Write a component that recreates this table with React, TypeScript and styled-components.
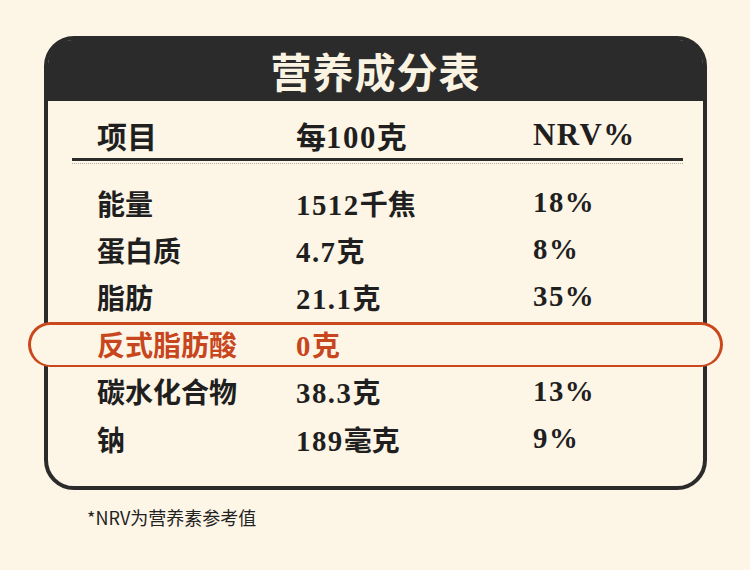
import styled, { createGlobalStyle } from "styled-components";

const GlobalStyle = createGlobalStyle`
  html, body {
    margin: 0;
    padding: 0;
    background: #fdf5e6;
  }
  body {
    width: 750px;
    height: 570px;
    overflow: hidden;
    font-family: "Liberation Serif", "Noto Sans CJK SC", serif;
  }
`;

const Page = styled.div`
  width: 750px;
  height: 570px;
  padding-top: 36px;
  box-sizing: border-box;
  background: #fdf5e6;
`;

const Card = styled.div`
  margin: 0 43px 0 44px;
  border: 4px solid #2b2b2b;
  border-radius: 30px;
  background: #fdf5e6;
`;

const Header = styled.div`
  height: 61px;
  background: #2b2b2b;
  border-radius: 24px 24px 0 0;
  display: flex;
  align-items: center;
  justify-content: center;
`;

const Title = styled.h1`
  margin: 0;
  color: #fbf3e2;
  font-size: 41px;
  font-weight: 700;
  font-family: "Noto Sans CJK SC", serif;
  letter-spacing: 1px;
  line-height: 1;
`;

const Body = styled.div`
  padding: 12px 0 24px;
`;

const Row = styled.div<{ $highlight?: boolean; $head?: boolean }>`
  position: relative;
  display: grid;
  grid-template-columns: 199px 237px 1fr;
  padding-left: 49px;
  height: ${(p) => (p.$head ? "40px" : "47.2px")};
  align-items: center;
  font-size: ${(p) => (p.$head ? "30px" : "28px")};
  font-weight: 700;
  color: ${(p) => (p.$highlight ? "#c8461d" : "#1f1f1f")};

  ${(p) =>
    p.$highlight &&
    `
    &::before {
      content: "";
      position: absolute;
      left: -20px;
      right: -20px;
      top: 1px;
      bottom: 1px;
      border: 3px solid #c9481e;
      border-bottom-width: 2.5px;
      border-radius: 24px;
      background: #fdf5e6;
    }
  `}
`;

const Cell = styled.span`
  position: relative;
  white-space: nowrap;
`;

const Num = styled.span`
  font-size: 1.03em;
  letter-spacing: 1.5px;
`;

const Divider = styled.div`
  position: relative;
  margin: 5px 20px 18px 24px;
  height: 3px;
  background: #2b2b2b;

  &::after {
    content: "";
    position: absolute;
    left: 0;
    right: 0;
    top: 5px;
    border-top: 1px dotted rgba(43, 43, 43, 0.35);
  }
`;

const Footnote = styled.p`
  margin: 14px 0 0 87px;
  font-family: "Noto Sans CJK SC", "Liberation Sans", sans-serif;
  font-size: 18px;
  color: #222;
`;

const rows = [
  { name: "能量", value: "1512千焦", nrv: "18%" },
  { name: "蛋白质", value: "4.7克", nrv: "8%" },
  { name: "脂肪", value: "21.1克", nrv: "35%" },
  { name: "反式脂肪酸", value: "0克", nrv: "", highlight: true },
  { name: "碳水化合物", value: "38.3克", nrv: "13%" },
  { name: "钠", value: "189毫克", nrv: "9%" },
];

// wraps latin runs so the digits get a bit more width, like the serif in the picture
function Mixed({ text }: { text: string }) {
  const parts = text.split(/([0-9A-Z.%]+)/).filter(Boolean);
  return (
    <>
      {parts.map((part, i) =>
        /^[0-9A-Z.%]+$/.test(part) ? <Num key={i}>{part}</Num> : part
      )}
    </>
  );
}

export default function App() {
  return (
    <>
      <GlobalStyle />
      <Page>
        <Card>
          <Header>
            <Title>营养成分表</Title>
          </Header>
          <Body>
            <Row $head>
              <Cell>项目</Cell>
              <Cell>
                <Mixed text="每100克" />
              </Cell>
              <Cell>
                <Mixed text="NRV%" />
              </Cell>
            </Row>
            <Divider />
            {rows.map((r) => (
              <Row key={r.name} $highlight={r.highlight}>
                <Cell>{r.name}</Cell>
                <Cell>
                  <Mixed text={r.value} />
                </Cell>
                <Cell>
                  <Mixed text={r.nrv} />
                </Cell>
              </Row>
            ))}
          </Body>
        </Card>
        <Footnote>*NRV为营养素参考值</Footnote>
      </Page>
    </>
  );
}
